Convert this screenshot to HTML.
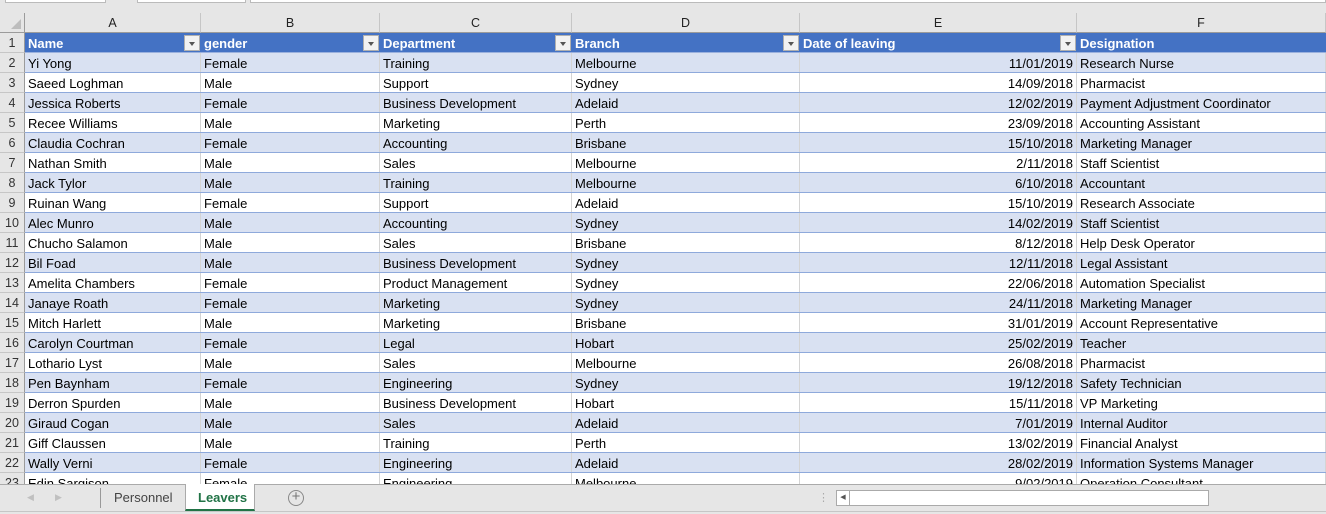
<!DOCTYPE html>
<html><head><meta charset="utf-8"><style>
*{margin:0;padding:0;box-sizing:border-box}
body{width:1326px;height:514px;overflow:hidden;background:#e6e6e6;font-family:"Liberation Sans",Carlito,sans-serif;font-size:13px;position:relative;color:#000}
.abs{position:absolute}
.colh{position:absolute;top:13px;height:20px;background:#e6e6e6;border-right:1px solid #c6c6c6;border-bottom:1px solid #9b9b9b;text-align:center;line-height:21px;color:#222;font-size:12.5px}
.grid{position:absolute;left:0;top:33px;width:1326px;height:451px;overflow:hidden;background:#fff}
.r{position:absolute;left:0;height:20px;width:1326px;border-bottom:1px solid #8ea9db;line-height:21px;white-space:nowrap}
.r.b{background:#d9e1f2}
.r.h{background:#4472c4;color:#fff;font-weight:bold;border-bottom:1px solid #9bb1de}
.n{position:absolute;left:0;width:25px;height:20px;background:#e6e6e6;color:#333;text-align:center;border-right:1px solid #9b9b9b;border-bottom:1px solid #c6c6c6;top:0;font-size:12.5px;font-weight:normal}
.c{position:absolute;top:0;height:19px;padding-left:3px;overflow:hidden;border-right:1px solid #d4d4d4}
.r.h .c{border-right:none}
.A{left:25px;width:176px}.B{left:201px;width:179px}.C{left:380px;width:192px}.D{left:572px;width:228px}.E{left:800px;width:277px;text-align:right;padding-right:3px}.F{left:1077px;width:249px}
.r.h .E{text-align:left}
.fb{position:absolute;top:2px;width:16px;height:16px;background:#f2f2f2;border:1px solid #b0b0b0}
.fb:after{content:"";position:absolute;left:4px;top:6px;border-left:3.5px solid transparent;border-right:3.5px solid transparent;border-top:4px solid #555}
</style></head><body>
<div class="abs" style="left:5px;top:-1px;width:101px;height:4px;border:1px solid #bbb;background:#fff"></div>
<div class="abs" style="left:137px;top:-1px;width:109px;height:4px;border:1px solid #bbb;background:#fff"></div>
<div class="abs" style="left:250px;top:-1px;width:1076px;height:4px;border:1px solid #bbb;background:#fff"></div>
<div class="colh" style="left:0;width:25px;border-right:1px solid #9b9b9b"><div class="abs" style="right:3px;bottom:3px;border-left:10px solid transparent;border-bottom:10px solid #bdbdbd;width:0;height:0"></div></div>
<div class="colh" style="left:25px;width:176px">A</div>
<div class="colh" style="left:201px;width:179px">B</div>
<div class="colh" style="left:380px;width:192px">C</div>
<div class="colh" style="left:572px;width:228px">D</div>
<div class="colh" style="left:800px;width:277px">E</div>
<div class="colh" style="left:1077px;width:249px">F</div>
<div class="grid">
<div class="r h" style="top:0"><span class="n">1</span><span class="c A">Name</span><span class="c B">gender</span><span class="c C">Department</span><span class="c D">Branch</span><span class="c E">Date of leaving</span><span class="c F">Designation</span>
<i class="fb" style="left:184px"></i><i class="fb" style="left:363px"></i><i class="fb" style="left:555px"></i><i class="fb" style="left:783px"></i><i class="fb" style="left:1060px"></i></div>
<div class="r b" style="top:20px"><span class="n">2</span><span class="c A">Yi Yong</span><span class="c B">Female</span><span class="c C">Training</span><span class="c D">Melbourne</span><span class="c E">11/01/2019</span><span class="c F">Research Nurse</span></div>
<div class="r" style="top:40px"><span class="n">3</span><span class="c A">Saeed Loghman</span><span class="c B">Male</span><span class="c C">Support</span><span class="c D">Sydney</span><span class="c E">14/09/2018</span><span class="c F">Pharmacist</span></div>
<div class="r b" style="top:60px"><span class="n">4</span><span class="c A">Jessica Roberts</span><span class="c B">Female</span><span class="c C">Business Development</span><span class="c D">Adelaid</span><span class="c E">12/02/2019</span><span class="c F">Payment Adjustment Coordinator</span></div>
<div class="r" style="top:80px"><span class="n">5</span><span class="c A">Recee Williams</span><span class="c B">Male</span><span class="c C">Marketing</span><span class="c D">Perth</span><span class="c E">23/09/2018</span><span class="c F">Accounting Assistant</span></div>
<div class="r b" style="top:100px"><span class="n">6</span><span class="c A">Claudia Cochran</span><span class="c B">Female</span><span class="c C">Accounting</span><span class="c D">Brisbane</span><span class="c E">15/10/2018</span><span class="c F">Marketing Manager</span></div>
<div class="r" style="top:120px"><span class="n">7</span><span class="c A">Nathan Smith</span><span class="c B">Male</span><span class="c C">Sales</span><span class="c D">Melbourne</span><span class="c E">2/11/2018</span><span class="c F">Staff Scientist</span></div>
<div class="r b" style="top:140px"><span class="n">8</span><span class="c A">Jack Tylor</span><span class="c B">Male</span><span class="c C">Training</span><span class="c D">Melbourne</span><span class="c E">6/10/2018</span><span class="c F">Accountant</span></div>
<div class="r" style="top:160px"><span class="n">9</span><span class="c A">Ruinan Wang</span><span class="c B">Female</span><span class="c C">Support</span><span class="c D">Adelaid</span><span class="c E">15/10/2019</span><span class="c F">Research Associate</span></div>
<div class="r b" style="top:180px"><span class="n">10</span><span class="c A">Alec Munro</span><span class="c B">Male</span><span class="c C">Accounting</span><span class="c D">Sydney</span><span class="c E">14/02/2019</span><span class="c F">Staff Scientist</span></div>
<div class="r" style="top:200px"><span class="n">11</span><span class="c A">Chucho Salamon</span><span class="c B">Male</span><span class="c C">Sales</span><span class="c D">Brisbane</span><span class="c E">8/12/2018</span><span class="c F">Help Desk Operator</span></div>
<div class="r b" style="top:220px"><span class="n">12</span><span class="c A">Bil Foad</span><span class="c B">Male</span><span class="c C">Business Development</span><span class="c D">Sydney</span><span class="c E">12/11/2018</span><span class="c F">Legal Assistant</span></div>
<div class="r" style="top:240px"><span class="n">13</span><span class="c A">Amelita Chambers</span><span class="c B">Female</span><span class="c C">Product Management</span><span class="c D">Sydney</span><span class="c E">22/06/2018</span><span class="c F">Automation Specialist</span></div>
<div class="r b" style="top:260px"><span class="n">14</span><span class="c A">Janaye Roath</span><span class="c B">Female</span><span class="c C">Marketing</span><span class="c D">Sydney</span><span class="c E">24/11/2018</span><span class="c F">Marketing Manager</span></div>
<div class="r" style="top:280px"><span class="n">15</span><span class="c A">Mitch Harlett</span><span class="c B">Male</span><span class="c C">Marketing</span><span class="c D">Brisbane</span><span class="c E">31/01/2019</span><span class="c F">Account Representative</span></div>
<div class="r b" style="top:300px"><span class="n">16</span><span class="c A">Carolyn Courtman</span><span class="c B">Female</span><span class="c C">Legal</span><span class="c D">Hobart</span><span class="c E">25/02/2019</span><span class="c F">Teacher</span></div>
<div class="r" style="top:320px"><span class="n">17</span><span class="c A">Lothario Lyst</span><span class="c B">Male</span><span class="c C">Sales</span><span class="c D">Melbourne</span><span class="c E">26/08/2018</span><span class="c F">Pharmacist</span></div>
<div class="r b" style="top:340px"><span class="n">18</span><span class="c A">Pen Baynham</span><span class="c B">Female</span><span class="c C">Engineering</span><span class="c D">Sydney</span><span class="c E">19/12/2018</span><span class="c F">Safety Technician</span></div>
<div class="r" style="top:360px"><span class="n">19</span><span class="c A">Derron Spurden</span><span class="c B">Male</span><span class="c C">Business Development</span><span class="c D">Hobart</span><span class="c E">15/11/2018</span><span class="c F">VP Marketing</span></div>
<div class="r b" style="top:380px"><span class="n">20</span><span class="c A">Giraud Cogan</span><span class="c B">Male</span><span class="c C">Sales</span><span class="c D">Adelaid</span><span class="c E">7/01/2019</span><span class="c F">Internal Auditor</span></div>
<div class="r" style="top:400px"><span class="n">21</span><span class="c A">Giff Claussen</span><span class="c B">Male</span><span class="c C">Training</span><span class="c D">Perth</span><span class="c E">13/02/2019</span><span class="c F">Financial Analyst</span></div>
<div class="r b" style="top:420px"><span class="n">22</span><span class="c A">Wally Verni</span><span class="c B">Female</span><span class="c C">Engineering</span><span class="c D">Adelaid</span><span class="c E">28/02/2019</span><span class="c F">Information Systems Manager</span></div>
<div class="r" style="top:440px"><span class="n">23</span><span class="c A">Edin Sargison</span><span class="c B">Female</span><span class="c C">Engineering</span><span class="c D">Melbourne</span><span class="c E">9/02/2019</span><span class="c F">Operation Consultant</span></div>
</div>
<div class="abs" style="left:0;top:484px;width:1326px;height:30px;background:#e6e6e6;border-top:1px solid #aaa"></div>
<div class="abs" style="left:0;top:511px;width:1326px;height:1px;background:#c6c6c6"></div>
<div class="abs" style="left:27px;top:492px;color:#c0c0c0;font-size:9px">&#9664;</div>
<div class="abs" style="left:55px;top:492px;color:#c0c0c0;font-size:9px">&#9654;</div>
<div class="abs" style="left:100px;top:488px;width:1px;height:20px;background:#999"></div>
<div class="abs" style="left:114px;top:490px;color:#444;font-size:13px">Personnel</div>
<div class="abs" style="left:185px;top:484px;width:70px;height:27px;background:#fff;border:1px solid #aaa;border-top:none;border-bottom:2px solid #217346"></div>
<div class="abs" style="left:198px;top:490px;color:#217346;font-size:13px;font-weight:bold">Leavers</div>
<div class="abs" style="left:288px;top:490px;width:16px;height:16px;border:1.5px solid #888;border-radius:50%;color:#777;font-size:15px;line-height:12px;text-align:center">+</div>
<div class="abs" style="left:818px;top:491px;color:#aaa;font-size:11px">&#8942;</div>
<div class="abs" style="left:836px;top:490px;width:14px;height:16px;background:#fff;border:1px solid #aaa;font-size:7px;color:#555;line-height:14px;text-align:center">&#9664;</div>
<div class="abs" style="left:849px;top:490px;width:360px;height:16px;background:#fff;border:1px solid #aaa"></div>
</body></html>
